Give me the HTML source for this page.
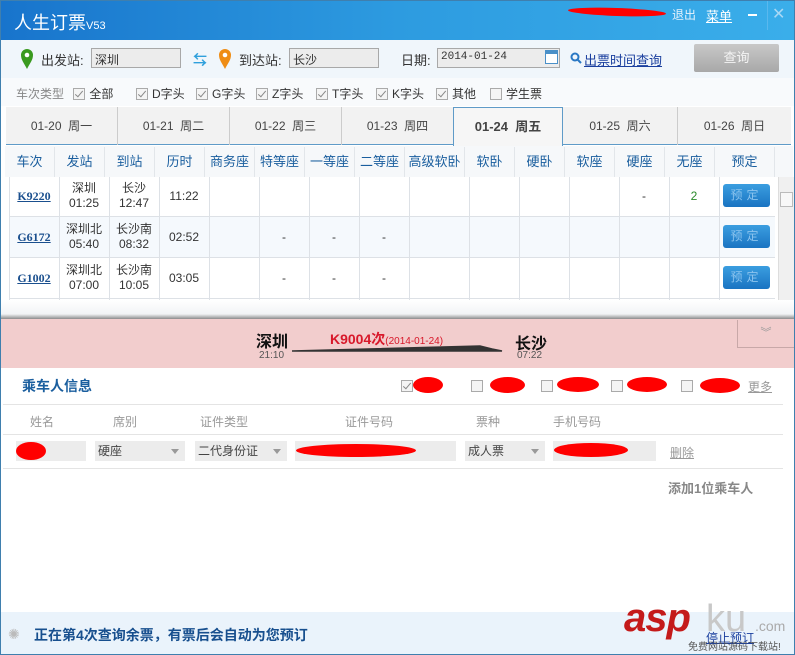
<!DOCTYPE html>
<html><head><meta charset="utf-8"><style>
*{margin:0;padding:0;box-sizing:border-box}
body{width:795px;height:655px;overflow:hidden;font-family:"Liberation Sans","Noto Sans CJK SC",sans-serif;font-size:12px;color:#333;background:#fff;position:relative}
.abs{position:absolute}
.win{position:absolute;left:0;top:0;width:795px;height:655px;border:1px solid #3f7fae}
.title{left:0;top:0;width:795px;height:40px;background:linear-gradient(90deg,#1874cc,#2d9be0 50%,#3aaeea)}
.inp{position:absolute;height:20px;background:#ececec;border:1px solid #a8a8a8;font-size:12px;padding:2px 3px;color:#333}
.cb{display:inline-block;width:12px;height:12px;border:1px solid #aaa;background:#f4f4f4;vertical-align:-2px;margin-right:4px;position:relative}
.cb.c:after{content:"";position:absolute;left:3px;top:0px;width:3px;height:7px;border:solid #888;border-width:0 1.5px 1.5px 0;transform:rotate(40deg)}
.tab{position:absolute;top:107px;height:38px;border-right:1px solid #ccc;text-align:center;line-height:38px;color:#444;font-size:12px}
.hd{position:absolute;top:147px;height:30px;line-height:30px;text-align:center;color:#1a5e9e;font-size:13px;border-right:1px solid #e2e6ea}
.vl{position:absolute;top:177px;height:123px;width:1px;background:#dde1e6}
.cell{position:absolute;text-align:center;font-size:12px;line-height:15px}
.btn{position:absolute;left:723px;width:47px;height:23px;background:linear-gradient(#3b9ee0,#1a74c2);border-radius:3px;color:#8cc4ee;text-align:center;line-height:23px;font-size:12px;letter-spacing:4px}
.tn{color:#1a4f8e;font-weight:bold;text-decoration:underline;font-family:"Liberation Serif",serif}
.sel{position:absolute;top:441px;height:20px;background:#ececec;font-size:12px;line-height:20px;padding-left:3px;color:#444}
.sel i{position:absolute;right:6px;top:8px;border:4px solid transparent;border-top:5px solid #999;border-bottom:0}
.red{position:absolute;background:#f00;border-radius:50%}
</style></head><body>
<div class="abs title"></div>
<div class="abs" style="left:14px;top:9px;color:#fff;font-size:18px">人生订票<span style="font-size:11px">V53</span></div>
<div class="red" style="left:568px;top:8px;width:98px;height:8px;transform:rotate(2deg)"></div>
<div class="abs" style="left:672px;top:6px;color:#e6f2fc;font-size:12px">退出</div>
<div class="abs" style="left:706px;top:6px;color:#fff;font-size:13px;text-decoration:underline">菜单</div>
<div class="abs" style="left:748px;top:14px;width:9px;height:2px;background:#fff"></div>
<div class="abs" style="left:767px;top:0;width:1px;height:30px;background:#5ab8ee"></div>
<div class="abs" style="left:772px;top:4px;color:#a9d8f5;font-size:16px">✕</div>

<div class="abs" style="left:1px;top:40px;width:793px;height:38px;background:#f0f6fb"></div>
<svg class="abs" style="left:20px;top:48px" width="14" height="22" viewBox="0 0 14 22"><path d="M7 21 C4 15 1 12 1 7 A6 6 0 0 1 13 7 C13 12 10 15 7 21Z" fill="#3a9a1f"/><circle cx="7" cy="7" r="2.3" fill="#fff"/></svg>
<div class="abs" style="left:41px;top:50px;font-size:13px">出发站:</div>
<div class="inp" style="left:91px;top:48px;width:90px">深圳</div>
<div class="abs" style="left:193px;top:50px;color:#2fa0dc;font-size:14px;font-weight:bold">⇆</div>
<svg class="abs" style="left:218px;top:48px" width="14" height="22" viewBox="0 0 14 22"><path d="M7 21 C4 15 1 12 1 7 A6 6 0 0 1 13 7 C13 12 10 15 7 21Z" fill="#ef8d15"/><circle cx="7" cy="7" r="2.3" fill="#fff"/></svg>
<div class="abs" style="left:239px;top:50px;font-size:13px">到达站:</div>
<div class="inp" style="left:289px;top:48px;width:90px">长沙</div>
<div class="abs" style="left:401px;top:50px;font-size:13px">日期:</div>
<div class="inp" style="left:437px;top:48px;width:123px;font-family:'Liberation Mono',monospace;font-size:11px">2014-01-24</div>
<div class="abs" style="left:545px;top:50px;width:13px;height:14px;border:1px solid #4a90c8;background:#fff;border-top:4px solid #4a90c8"></div>
<svg class="abs" style="left:570px;top:52px" width="12" height="12"><circle cx="5" cy="5" r="3.5" fill="none" stroke="#2a78c4" stroke-width="2"/><path d="M7.5 7.5 L11 11" stroke="#2a78c4" stroke-width="2"/></svg>
<div class="abs" style="left:584px;top:50px;color:#1a3f9e;font-size:13px;text-decoration:underline">出票时间查询</div>
<div class="abs" style="left:694px;top:44px;width:85px;height:28px;background:linear-gradient(#c8c8c8,#a8a8a8);border-radius:2px;color:#f4f4f4;text-align:center;line-height:28px;font-size:13px">查询</div>

<div class="abs" style="left:1px;top:78px;width:793px;height:28px;background:#f8fafc"></div>
<div class="abs" style="left:16px;top:85px;color:#888;font-size:12px">车次类型 <span style="color:#333;margin-left:6px"><span class="cb c"></span>全部</span></div>
<div class="abs" style="left:136px;top:85px"><span class="cb c"></span>D字头</div>
<div class="abs" style="left:196px;top:85px"><span class="cb c"></span>G字头</div>
<div class="abs" style="left:256px;top:85px"><span class="cb c"></span>Z字头</div>
<div class="abs" style="left:316px;top:85px"><span class="cb c"></span>T字头</div>
<div class="abs" style="left:376px;top:85px"><span class="cb c"></span>K字头</div>
<div class="abs" style="left:436px;top:85px"><span class="cb c"></span>其他</div>
<div class="abs" style="left:490px;top:85px"><span class="cb"></span>学生票</div>

<div class="abs" style="left:6px;top:107px;width:785px;height:38px;background:#f2f2f2;border-bottom:1px solid #5f9bc8"></div>
<div class="tab" style="left:6px;width:112px">01-20 &nbsp;周一</div>
<div class="tab" style="left:118px;width:112px">01-21 &nbsp;周二</div>
<div class="tab" style="left:230px;width:112px">01-22 &nbsp;周三</div>
<div class="tab" style="left:342px;width:112px">01-23 &nbsp;周四</div>
<div class="tab" style="left:453px;width:110px;background:#f6f6f6;border:1px solid #5f9bc8;border-bottom:none;height:39px;font-weight:bold;font-size:13px">01-24 &nbsp;周五</div>
<div class="tab" style="left:563px;width:115px">01-25 &nbsp;周六</div>
<div class="tab" style="left:678px;width:113px;border-right:none">01-26 &nbsp;周日</div>

<div class="abs" style="left:5px;top:146px;width:788px;height:31px;background:#f6f8fa"></div>
<div class="hd" style="left:5px;width:50px">车次</div>
<div class="hd" style="left:55px;width:50px">发站</div>
<div class="hd" style="left:105px;width:50px">到站</div>
<div class="hd" style="left:155px;width:50px">历时</div>
<div class="hd" style="left:205px;width:50px">商务座</div>
<div class="hd" style="left:255px;width:50px">特等座</div>
<div class="hd" style="left:305px;width:50px">一等座</div>
<div class="hd" style="left:355px;width:50px">二等座</div>
<div class="hd" style="left:405px;width:60px">高级软卧</div>
<div class="hd" style="left:465px;width:50px">软卧</div>
<div class="hd" style="left:515px;width:50px">硬卧</div>
<div class="hd" style="left:565px;width:50px">软座</div>
<div class="hd" style="left:615px;width:50px">硬座</div>
<div class="hd" style="left:665px;width:50px">无座</div>
<div class="hd" style="left:715px;width:60px">预定</div>

<div class="abs" style="left:9px;top:177px;width:766px;height:123px;background:#fff"></div>
<div class="abs" style="left:9px;top:217px;width:766px;height:41px;background:#f5f9fd"></div>
<div class="abs" style="left:9px;top:216px;width:766px;height:1px;background:#dde1e6"></div>
<div class="abs" style="left:9px;top:257px;width:766px;height:1px;background:#dde1e6"></div>
<div class="abs" style="left:9px;top:298px;width:766px;height:1px;background:#dde1e6"></div>
<div class="vl" style="left:9px"></div><div class="vl" style="left:59px"></div><div class="vl" style="left:109px"></div><div class="vl" style="left:159px"></div><div class="vl" style="left:209px"></div><div class="vl" style="left:259px"></div><div class="vl" style="left:309px"></div><div class="vl" style="left:359px"></div><div class="vl" style="left:409px"></div><div class="vl" style="left:469px"></div><div class="vl" style="left:519px"></div><div class="vl" style="left:569px"></div><div class="vl" style="left:619px"></div><div class="vl" style="left:669px"></div><div class="vl" style="left:719px"></div>
<div class="abs" style="left:778px;top:177px;width:16px;height:123px;background:#f0f0f0;border-left:1px solid #ddd"></div>
<div class="abs" style="left:780px;top:192px;width:13px;height:15px;background:#f8f8f8;border:1px solid #bbb"></div>

<div class="cell" style="left:9px;top:189px;width:50px"><span class="tn">K9220</span></div>
<div class="cell" style="left:59px;top:181px;width:50px">深圳<br>01:25</div>
<div class="cell" style="left:109px;top:181px;width:50px">长沙<br>12:47</div>
<div class="cell" style="left:159px;top:189px;width:50px">11:22</div>
<div class="cell" style="left:619px;top:189px;width:50px">-</div>
<div class="cell" style="left:669px;top:189px;width:50px;color:#2a8a2a">2</div>
<div class="btn" style="top:184px">预定</div>

<div class="cell" style="left:9px;top:230px;width:50px"><span class="tn">G6172</span></div>
<div class="cell" style="left:59px;top:222px;width:50px">深圳北<br>05:40</div>
<div class="cell" style="left:109px;top:222px;width:50px">长沙南<br>08:32</div>
<div class="cell" style="left:159px;top:230px;width:50px">02:52</div>
<div class="cell" style="left:259px;top:230px;width:50px">-</div><div class="cell" style="left:309px;top:230px;width:50px">-</div><div class="cell" style="left:359px;top:230px;width:50px">-</div>
<div class="btn" style="top:225px">预定</div>

<div class="cell" style="left:9px;top:271px;width:50px"><span class="tn">G1002</span></div>
<div class="cell" style="left:59px;top:263px;width:50px">深圳北<br>07:00</div>
<div class="cell" style="left:109px;top:263px;width:50px">长沙南<br>10:05</div>
<div class="cell" style="left:159px;top:271px;width:50px">03:05</div>
<div class="cell" style="left:259px;top:271px;width:50px">-</div><div class="cell" style="left:309px;top:271px;width:50px">-</div><div class="cell" style="left:359px;top:271px;width:50px">-</div>
<div class="btn" style="top:266px">预定</div>

<div class="abs" style="left:1px;top:300px;width:793px;height:20px;background:linear-gradient(#fff,#f2f4f6 70%,#777)"></div>
<div class="abs" style="left:1px;top:319px;width:793px;height:49px;background:#f2cdcd"></div>
<div class="abs" style="left:737px;top:320px;width:57px;height:28px;border:1px solid #c8a8a8;border-right:none;border-top:none;color:#999;text-align:center;font-size:11px;line-height:26px">︾</div>
<div class="abs" style="left:256px;top:328px;font-size:16px;font-weight:bold;color:#111">深圳</div>
<div class="abs" style="left:259px;top:350px;font-size:10px;color:#555">21:10</div>
<div class="abs" style="left:330px;top:329px;font-size:14px;font-weight:bold;color:#d8182a">K9004次<span style="font-size:10px;font-weight:normal">(2014-01-24)</span></div>
<svg class="abs" style="left:292px;top:343px" width="220" height="12"><path d="M0 8 H210 L200 6 L188 3 Z" fill="#333" stroke="#333" stroke-width="1.5"/></svg>
<div class="abs" style="left:515px;top:330px;font-size:16px;font-weight:bold;color:#111">长沙</div>
<div class="abs" style="left:517px;top:350px;font-size:10px;color:#555">07:22</div>

<div class="abs" style="left:22px;top:376px;font-size:14px;font-weight:bold;color:#1a5e9e">乘车人信息</div>
<div class="abs" style="left:401px;top:379px"><span class="cb c"></span></div><div class="red" style="left:413px;top:377px;width:30px;height:16px"></div>
<div class="abs" style="left:471px;top:379px"><span class="cb"></span></div><div class="red" style="left:490px;top:377px;width:35px;height:16px"></div>
<div class="abs" style="left:541px;top:379px"><span class="cb"></span></div><div class="red" style="left:557px;top:377px;width:42px;height:15px"></div>
<div class="abs" style="left:611px;top:379px"><span class="cb"></span></div><div class="red" style="left:627px;top:377px;width:40px;height:15px"></div>
<div class="abs" style="left:681px;top:379px"><span class="cb"></span></div><div class="red" style="left:700px;top:378px;width:40px;height:15px"></div>
<div class="abs" style="left:748px;top:378px;color:#999;font-size:12px;text-decoration:underline">更多</div>
<div class="abs" style="left:3px;top:404px;width:780px;height:1px;background:#e4e4e4"></div>
<div class="abs" style="left:30px;top:413px;color:#999;font-size:12px">姓名</div>
<div class="abs" style="left:113px;top:413px;color:#999">席别</div>
<div class="abs" style="left:200px;top:413px;color:#999">证件类型</div>
<div class="abs" style="left:345px;top:413px;color:#999">证件号码</div>
<div class="abs" style="left:476px;top:413px;color:#999">票种</div>
<div class="abs" style="left:553px;top:413px;color:#999">手机号码</div>
<div class="abs" style="left:3px;top:434px;width:780px;height:1px;background:#e4e4e4"></div>
<div class="sel" style="left:16px;width:70px"></div><div class="red" style="left:16px;top:442px;width:30px;height:18px"></div>
<div class="sel" style="left:95px;width:90px">硬座<i></i></div>
<div class="sel" style="left:195px;width:92px">二代身份证<i></i></div>
<div class="sel" style="left:295px;width:161px"></div><div class="red" style="left:296px;top:444px;width:120px;height:13px"></div>
<div class="sel" style="left:465px;width:80px">成人票<i></i></div>
<div class="sel" style="left:553px;width:103px"></div><div class="red" style="left:554px;top:443px;width:74px;height:14px"></div>
<div class="abs" style="left:670px;top:444px;color:#999;text-decoration:underline">删除</div>
<div class="abs" style="left:3px;top:468px;width:780px;height:1px;background:#e4e4e4"></div>
<div class="abs" style="left:668px;top:478px;color:#888;font-size:13px;font-weight:bold">添加1位乘车人</div>

<div class="abs" style="left:1px;top:612px;width:793px;height:42px;background:#eaf3fb"></div>
<div class="abs" style="left:8px;top:626px;color:#bbb;font-size:14px">✺</div>
<div class="abs" style="left:34px;top:625px;color:#174f8e;font-size:14px;font-weight:bold">正在第4次查询余票，有票后会自动为您预订</div>
<div class="abs" style="left:624px;top:596px;color:#c41a1a;font-size:40px;font-weight:bold;font-style:italic;letter-spacing:-1px">asp</div>
<div class="abs" style="left:706px;top:598px;color:#c8c8c8;font-size:38px">ku</div>
<div class="abs" style="left:755px;top:618px;color:#aaa;font-size:14px">.com</div>
<div class="abs" style="left:706px;top:629px;color:#1a3f9e;font-size:12px;text-decoration:underline">停止预订</div>
<div class="abs" style="left:688px;top:638px;color:#555;font-size:10px">免费网站源码下载站!</div>
<div class="win"></div>
</body></html>
